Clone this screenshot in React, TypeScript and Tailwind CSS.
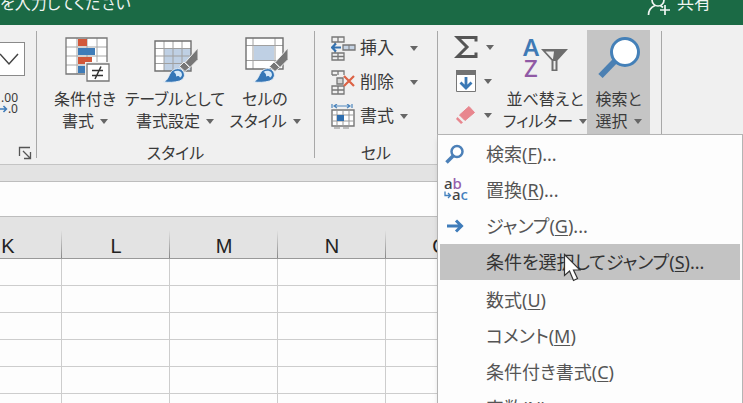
import type { ReactNode } from "react";

function Caret({ className = "" }: { className?: string }) {
  return (
    <svg className={`inline-block shrink-0 ${className}`} width="8" height="5" viewBox="0 0 8 5" aria-hidden="true">
      <path d="M0 0h8L4 5z" fill="#666" />
    </svg>
  );
}

function ConditionalIcon() {
  return (
    <svg className="overflow-visible" width="48" height="48" viewBox="0 0 48 48" aria-hidden="true">
      <path d="M5 4h41v36H5z" fill="#fff" />
      <path d="M16 4v36M26 4v36M36 4v36M5 13h41M5 22h41M5 31h41" stroke="#a6a6a6" fill="none" />
      <path d="M5 4h41v36H5z" stroke="#777" fill="none" strokeWidth="1.3" />
      <path d="M17 5h9v7h-9zM17 23h14v7H17z" fill="#d2583a" />
      <path d="M17 14h17v7H17zM17 32h7v7h-7z" fill="#3f7cb8" />
      <path d="M24 28h26v22H24z" fill="#f0f0f0" />
      <path d="M26 30h22v17H26z" fill="#fff" stroke="#777" strokeWidth="1.3" />
      <path d="M31 36.500h11M31 41.500h11M40 32.500l-6 12.500" stroke="#333" strokeWidth="1.500" fill="none" />
    </svg>
  );
}

function Brush() {
  return (
    <>
      <path d="M47 14v11.500L39 33.500l-5-5z" fill="#777" stroke="#f0f0f0" strokeWidth="1" />
      <path d="M33 28l5.500 5.500-4.500 4-5.500-5z" fill="#777" stroke="#f0f0f0" strokeWidth="1" />
      <path d="M12.500 48c5-2 5-7 8-10.500 3-3.500 9-4 11.500-.5 3 4 1 8.500-3.500 10-5 1.600-11 1.500-16 1z" fill="#3576b6" stroke="#e6eef6" strokeWidth="1" />
      <path d="M22.500 38c2.500-1.800 6.500-1.500 8 .8 1 2 .3 4-1.500 5-.5-1.800-2-2.300-4-1.300.5-2-.5-3.500-2.500-4.500z" fill="#d6e8f7" />
    </>
  );
}

function TableStyleIcon() {
  return (
    <svg className="overflow-visible" width="48" height="48" viewBox="0 0 48 48" aria-hidden="true">
      <path d="M4 7h36v30H4z" fill="#fff" />
      <path d="M13 15h27v22H13z" fill="#bfd0e4" />
      <path d="M13 7v30M22 7v30M31 7v30M4 14.500h36M4 22h36M4 29.500h36" stroke="#a0a0a0" fill="none" />
      <path d="M4 7h36v30H4z" stroke="#707070" fill="none" strokeWidth="1.4" />
      <Brush />
    </svg>
  );
}

function CellStyleIcon() {
  return (
    <svg className="overflow-visible" width="48" height="48" viewBox="0 0 48 48" aria-hidden="true">
      <path d="M5 4h37v31H5z" fill="#fff" />
      <path d="M13 12h20v14H13z" fill="#bfd0e4" />
      <path d="M12 4v31M34 4v31M5 11.500h37M5 26.500h37" stroke="#a0a0a0" fill="none" />
      <path d="M5 4h37v31H5z" stroke="#707070" fill="none" strokeWidth="1.4" />
      <Brush />
    </svg>
  );
}

function InsertIcon() {
  return (
    <svg width="25" height="25" viewBox="0 0 25 25" aria-hidden="true">
      <path d="M1 1h12v5H1zM7 1v5M1 17h12v7H1zM7 17v7M1 20.500h12M4 6v2M4 14v3" fill="none" stroke="#777" strokeWidth="1.3" />
      <path d="M12 9h12v5H12z" fill="#c5d3e4" stroke="#777" strokeWidth="1.3" />
      <path d="M18 9v5" stroke="#777" />
      <path d="M1 11.500h9M5 7.500l-4 4 4 4" fill="none" stroke="#3572b0" strokeWidth="2.200" />
    </svg>
  );
}

function DeleteIcon() {
  return (
    <svg width="25" height="25" viewBox="0 0 25 25" aria-hidden="true">
      <path d="M1 5V1h12v4M1 5h5M7 1v4M1 16h12v8H1zM7 16v8M1 20h12" fill="none" stroke="#777" strokeWidth="1.3" />
      <path d="M6 8h6v6H6z" fill="#d5d5d5" stroke="#777" strokeWidth="1.3" />
      <path d="M13 6l10 10M23 6L13 16" stroke="#dc6245" strokeWidth="2.200" />
    </svg>
  );
}

function FormatIcon() {
  return (
    <svg width="25" height="25" viewBox="0 0 25 25" aria-hidden="true">
      <path d="M1 0v4M21 0v4M3 2h16M6 0L3 2l3 2M16 0l3 2-3 2" fill="none" stroke="#4d86bd" strokeWidth="1.200" />
      <path d="M1 6h22v16H1z" fill="#fff" stroke="#777" strokeWidth="1.4" />
      <path d="M6 6v16M12 6v16M18 6v16M1 11h22M1 17h22" stroke="#999" />
      <path d="M6 11h7v6H6z" fill="#2f6fb0" />
      <path d="M3 24h6M12 24h6" stroke="#888" />
    </svg>
  );
}

function SigmaIcon() {
  return (
    <svg width="24" height="24" viewBox="0 0 24 24" aria-hidden="true">
      <path d="M22 6.500V2.500H3.500L13 12l-9.500 9.500H22v-4" fill="none" stroke="#555" strokeWidth="3" />
    </svg>
  );
}

function FillIcon() {
  return (
    <svg width="24" height="24" viewBox="0 0 24 24" aria-hidden="true">
      <path d="M2.500 1.500h19v21h-19z" fill="#fff" stroke="#777" />
      <path d="M2 1h20v5H2z" fill="#737373" />
      <path d="M12 8v11M6.500 13.500l5.500 5.500 5.500-5.500" fill="none" stroke="#3a78b5" strokeWidth="2.800" />
    </svg>
  );
}

function EraserIcon() {
  return (
    <svg width="24" height="24" viewBox="0 0 24 24" aria-hidden="true">
      <path d="M15 3.500l5.500 6L11 17.500 5.500 12z" fill="#e8868e" stroke="#e8868e" strokeLinejoin="round" />
      <path d="M3.500 14l5.500 5.500-2 1.500L2 16z" fill="#e8868e" />
    </svg>
  );
}

function SortFilterIcon() {
  return (
    <svg width="48" height="48" viewBox="0 0 48 48" aria-hidden="true">
      <text x="2" y="22" fontSize="24" fontWeight="600" fontFamily="Noto Sans, sans-serif" fill="#3f7ab5">A</text>
      <text x="3" y="43" fontSize="24" fontWeight="500" fontFamily="Noto Sans, sans-serif" fill="#905aa5">Z</text>
      <path d="M20 15h27L36.500 26.500V37h-6V26.500z" fill="#6d6d6d" />
      <path d="M24.500 17.500H33l-1 7.500h-.500zM32.500 27h2v8.500h-2z" fill="#eee" />
    </svg>
  );
}

function FindIcon() {
  return (
    <svg width="48" height="48" viewBox="0 0 48 48" aria-hidden="true">
      <path d="M20 27L5.500 42" stroke="#4c80b2" strokeWidth="6" />
      <circle cx="30" cy="18" r="13.500" fill="#fff" stroke="#4480b8" strokeWidth="3" />
    </svg>
  );
}

function BigButton({ icon, top, bottom, className }: { icon: ReactNode; top: string; bottom: string; className: string }) {
  return (
    <button type="button" className={`flex h-[104px] shrink-0 flex-col items-center pt-1 leading-[22px] whitespace-nowrap ${className}`}>
      <span className="mb-1.5 h-12">{icon}</span>
      <span>{top}</span>
      <span className="flex items-center gap-1.5">
        {bottom}
        <Caret />
      </span>
    </button>
  );
}

function SmallButton({ icon, label, name, gap }: { icon: ReactNode; label?: string; name?: string; gap: string }) {
  return (
    <button type="button" aria-label={name} className="flex h-[34px] items-center">
      {icon}
      {label && <span className="ml-1 text-[17px]">{label}</span>}
      <Caret className={gap} />
    </button>
  );
}

function Separator() {
  return <div className="my-[6px] w-px shrink-0 bg-[#a8a8a8]" />;
}

function GroupLabel({ children }: { children: ReactNode }) {
  return <div className="pt-2 text-center leading-[22px]">{children}</div>;
}

const menuItems: { label: string; k: string; dots?: boolean; active?: boolean; icon?: ReactNode }[] = [
  {
    label: "検索",
    k: "F",
    dots: true,
    icon: (
      <svg className="ml-1" width="22" height="22" viewBox="0 0 22 22" aria-hidden="true">
        <path d="M9 13l-6.500 6.500" stroke="#4c80b8" strokeWidth="3.500" />
        <circle cx="13" cy="8.500" r="5.500" fill="#fff" stroke="#4c80b8" strokeWidth="2.500" />
      </svg>
    ),
  },
  {
    label: "置換",
    k: "R",
    dots: true,
    icon: (
      <svg className="ml-1" width="26" height="26" viewBox="0 0 26 26" fontFamily="Noto Sans, sans-serif" fontSize="15" fontWeight="500" aria-hidden="true">
        <text x="0" y="12" fill="#444">a<tspan fill="#9560ac">b</tspan></text>
        <text x="8" y="23" fill="#444">a<tspan fill="#4380bd">c</tspan></text>
        <path d="M1 14.500v4h5M4 16l2.500 2.500L4 21" fill="none" stroke="#4380bd" strokeWidth="1.3" />
      </svg>
    ),
  },
  {
    label: "ジャンプ",
    k: "G",
    dots: true,
    icon: (
      <svg className="ml-1" width="22" height="22" viewBox="0 0 22 22" aria-hidden="true">
        <path d="M3 11h15M12 5.500l5.500 5.500-5.500 5.500" fill="none" stroke="#3f7cba" strokeWidth="3" />
      </svg>
    ),
  },
  { label: "条件を選択してジャンプ", k: "S", dots: true, active: true },
  { label: "数式", k: "U" },
  { label: "コメント", k: "M" },
  { label: "条件付き書式", k: "C" },
  { label: "定数", k: "N" },
];

function FindMenu() {
  return (
    <div role="menu" className="absolute top-[109px] -left-px z-10 w-[306px] border border-[#b4b4b4] bg-[#fdfdfd] px-0.5 pt-px shadow-md">
      {menuItems.map((m) => (
        <button
          key={m.k}
          type="button"
          role="menuitem"
          className={`flex h-9 w-full items-center text-left text-[18px] whitespace-nowrap ${m.active ? "mb-0.5 bg-[#c3c3c3] text-[#333]" : "text-[#555]"}`}
        >
          <span className="w-[46px] shrink-0">{m.icon}</span>
          <span>
            {m.label}(<span className="underline underline-offset-2">{m.k}</span>){m.dots && "..."}
          </span>
        </button>
      ))}
      <svg className="absolute top-[118px] left-[125px]" width="18" height="30" viewBox="0 0 18 30" aria-hidden="true">
        <path d="M1.500 1.500v21l5-4.500 4 9.500 4-2-4-8.500h6.500z" fill="#fff" stroke="#333" strokeWidth="1.200" />
      </svg>
    </div>
  );
}

const columns = ["K", "L", "M", "N", "O", "P", "Q", "R"];
const rows = [1, 2, 3, 4, 5, 6];

export default function App() {
  return (
    <div className="h-screen overflow-hidden bg-[#fdfdfd] font-['Noto_Sans','Noto_Sans_CJK_JP',sans-serif] text-[16px] text-[#3a3a3a] [font-feature-settings:'palt']">
      <header className="flex h-[25px] justify-between overflow-hidden bg-[#1b6a45] pr-8 leading-[22px] text-[#f0f5f2]">
        <div className="-mt-2 -ml-4 whitespace-nowrap">業を入力してください</div>
        <button type="button" className="-mt-2 flex h-[22px] items-center gap-1.5 text-[17px]">
          <svg width="24" height="26" viewBox="0 0 24 26" fill="none" stroke="#f0f5f2" strokeWidth="1.700" aria-hidden="true">
            <circle cx="11" cy="10" r="6" />
            <path d="M1.500 25c0-5 3-8 6.500-9.500M13.500 15.500l2.500 2M18 15v10M13 20h10" />
          </svg>
          共有
        </button>
      </header>

      <div className="flex border-b border-[#c4c4c4] bg-[#f0f0f0]">
        <div className="flex w-9 shrink-0 flex-col items-start pt-[17px]">
          <div className="relative -ml-12 w-[73px]">
            <select aria-label="表示形式" className="block h-[34px] w-full appearance-none border border-[#8a8a8a] bg-white" />
            <svg className="pointer-events-none absolute top-[11px] right-[6px]" width="20" height="13" viewBox="0 0 20 13" aria-hidden="true">
              <path d="M1 1l9 10 9-10" fill="none" stroke="#444" strokeWidth="1.500" />
            </svg>
          </div>
          <button type="button" className="mt-4 w-[18px] text-right text-[12px] leading-[11px]">
            <span className="block">.00</span>
            <span className="flex items-center justify-end">
              <svg width="8" height="8" viewBox="0 0 8 8" aria-hidden="true">
                <path d="M0 4h6M3.500 1l3 3-3 3" fill="none" stroke="#3f7cba" strokeWidth="1.600" />
              </svg>
              .0
            </span>
          </button>
          <button type="button" aria-label="数値の書式" className="mt-auto mb-1 ml-[18px]">
            <svg className="block" width="14" height="14" viewBox="0 0 14 14" fill="none" stroke="#555" aria-hidden="true">
              <path d="M1.500 10V1.500H12M5 5l7 7M12.500 6v6.500H6" strokeWidth="1.300" />
            </svg>
          </button>
        </div>
        <Separator />

        <div className="w-[277px] shrink-0 pt-[5px]">
          <div className="flex gap-1 pl-3">
            <BigButton icon={<ConditionalIcon />} top="条件付き" bottom="書式" className="w-[72px]" />
            <BigButton icon={<TableStyleIcon />} top="テーブルとして" bottom="書式設定" className="w-[100px]" />
            <BigButton icon={<CellStyleIcon />} top="セルの" bottom="スタイル" className="w-[72px]" />
          </div>
          <GroupLabel>スタイル</GroupLabel>
        </div>
        <Separator />

        <div className="w-[122px] shrink-0 pt-[5px]">
          <div className="flex h-[104px] flex-col items-start pt-px pl-4">
            <SmallButton icon={<InsertIcon />} label="挿入" gap="ml-4" />
            <SmallButton icon={<DeleteIcon />} label="削除" gap="ml-4" />
            <SmallButton icon={<FormatIcon />} label="書式" gap="ml-1.5" />
          </div>
          <GroupLabel>セル</GroupLabel>
        </div>
        <Separator />

        <div className="relative w-[223px] shrink-0 pt-[5px]">
          <div className="flex">
            <div className="flex w-[65px] shrink-0 flex-col items-start pl-4">
              <SmallButton icon={<SigmaIcon />} name="オート SUM" gap="ml-2" />
              <SmallButton icon={<FillIcon />} name="フィル" gap="ml-1.5" />
              <SmallButton icon={<EraserIcon />} name="クリア" gap="ml-1.5" />
            </div>
            <BigButton icon={<SortFilterIcon />} top="並べ替えと" bottom="フィルター" className="w-[84px]" />
            <BigButton icon={<FindIcon />} top="検索と" bottom="選択" className="w-[63px] bg-[#c5c5c5]" />
          </div>
          <FindMenu />
        </div>
        <Separator />
      </div>

      <div className="h-4 bg-[#e3e3e3]" />
      <input type="text" aria-label="数式バー" className="block h-9 w-full border-y border-[#bdbdbd] bg-[#fdfdfd]" />

      <table className="-ml-[46px] w-[864px] table-fixed border-separate border-spacing-0">
        <thead>
          <tr>
            {columns.map((c) => (
              <th
                key={c}
                className="h-[42px] w-[108px] border-b border-[#999] bg-[#e3e3e3] bg-[linear-gradient(to_bottom,#e3e3e3,#888)] bg-[length:1px_28px] bg-right-bottom bg-no-repeat pt-4 font-['Liberation_Sans',sans-serif] text-[20px] leading-6 font-normal text-[#222]"
              >
                {c}
              </th>
            ))}
          </tr>
        </thead>
        <tbody>
          {rows.map((r) => (
            <tr key={r}>
              {columns.map((c) => (
                <td key={c} className="h-[27px] border-r border-b border-[#cdcdcd] p-0" />
              ))}
            </tr>
          ))}
        </tbody>
      </table>
    </div>
  );
}
